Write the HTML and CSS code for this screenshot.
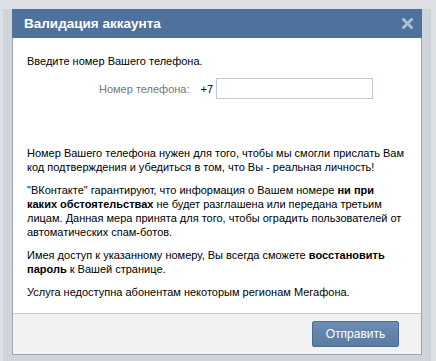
FILE: index.html
```html
<!DOCTYPE html>
<html lang="ru">
<head>
  <meta charset="UTF-8">
  <title>Валидация аккаунта</title>
  <link rel="stylesheet" href="styles.css">
</head>
<body>
  <div class="page">
    <div class="box">
      <div class="box-title">
        <span>Валидация аккаунта</span>
        <svg class="close" width="11" height="11" viewBox="0 0 11 11">
          <path d="M1.5 1.5 L9.5 9.5 M9.5 1.5 L1.5 9.5" stroke="#a9bed6" stroke-width="3" stroke-linecap="square"/>
        </svg>
      </div>
      <div class="box-body">
        <p class="intro">Введите номер Вашего телефона.</p>
        <div class="phone-row">
          <label for="phone">Номер телефона:</label>
          <span class="prefix">+7</span>
          <input type="text" id="phone">
        </div>
        <p>Номер Вашего телефона нужен для того, чтобы мы смогли прислать Вам код подтверждения и убедиться в том, что Вы - реальная личность!</p>
        <p>"ВКонтакте" гарантируют, что информация о Вашем номере <b>ни при каких обстоятельствах</b> не будет разглашена или передана третьим лицам. Данная мера принята для того, чтобы оградить пользователей от автоматических спам-ботов.</p>
        <p>Имея доступ к указанному номеру, Вы всегда сможете <b>восстановить пароль</b> к Вашей странице.</p>
        <p>Услуга недоступна абонентам некоторым регионам Мегафона.</p>
      </div>
      <div class="box-footer">
        <button class="btn">Отправить</button>
      </div>
    </div>
  </div>
</body>
</html>
```

FILE: styles.css
```css
* { margin: 0; padding: 0; box-sizing: border-box; }
body {
  font-family: "Liberation Sans", Arial, sans-serif;
  font-size: 11px;
  color: #000;
  background: #dcdfe3;
  height: 361px;
  overflow: hidden;
}
.page {
  margin: 9px 0 0 3px;
  width: 428px;
  background: #cfd4da;
  padding: 0 9px 8px 9px;
}
.box {
  border: 1px solid #9ea6b0;
  border-top: none;
  background: #fff;
}
.box-title {
  height: 29px;
  background: #4e729b;
  color: #fff;
  font-size: 13.5px;
  font-weight: bold;
  display: flex;
  align-items: center;
  justify-content: space-between;
  padding: 0 9px 0 12px;
  margin: 0 -1px;
}
.close { display: block; }
.box-body {
  padding: 16px 14px 14px 14px;
  line-height: 14px;
}
.intro { margin-bottom: 10px; }
.phone-row {
  display: flex;
  align-items: center;
  padding-left: 72px;
  margin-bottom: 47px;
}
.phone-row label {
  color: #777;
  margin-right: 11px;
}
.prefix { margin-right: 3px; }
.phone-row input {
  width: 157px;
  height: 21px;
  border: 1px solid #c0cad5;
  font: inherit;
  padding: 2px 3px;
}
.box-body p + p { margin-top: 9px; }
.box-footer {
  border-top: 1px solid #ccc;
  background: #f2f2f2;
  height: 41px;
  display: flex;
  align-items: center;
  justify-content: flex-end;
  padding-right: 22px;
}
.btn {
  width: 87px;
  height: 26px;
  border: 1px solid #4c6d93;
  border-radius: 2px;
  background: linear-gradient(#6d8db2, #5a7ca3);
  color: #fff;
  font-family: inherit;
  font-size: 12px;
  cursor: pointer;
}
```
